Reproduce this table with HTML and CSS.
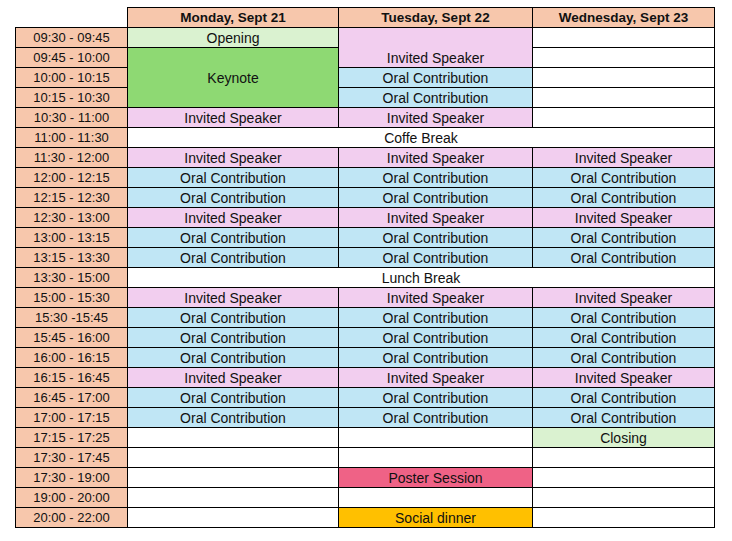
FILE: index.html
```html
<!DOCTYPE html>
<html>
<head>
<meta charset="utf-8">
<link rel="stylesheet" href="styles.css">
</head>
<body>
<table class="sched">
  <colgroup>
    <col class="c-time"><col class="c-mon"><col class="c-tue"><col class="c-wed">
  </colgroup>
  <thead>
    <tr><th class="corner"></th><th>Monday, Sept 21</th><th>Tuesday, Sept 22</th><th>Wednesday, Sept 23</th></tr>
  </thead>
  <tbody>
    <tr><td class="t">09:30 - 09:45</td><td class="open">Opening</td><td class="inv bottom" rowspan="2">Invited Speaker</td><td></td></tr>
    <tr><td class="t">09:45 - 10:00</td><td class="key" rowspan="3">Keynote</td><td></td></tr>
    <tr><td class="t">10:00 - 10:15</td><td class="oral">Oral Contribution</td><td></td></tr>
    <tr><td class="t">10:15 - 10:30</td><td class="oral">Oral Contribution</td><td></td></tr>
    <tr><td class="t">10:30 - 11:00</td><td class="inv">Invited Speaker</td><td class="inv">Invited Speaker</td><td></td></tr>
    <tr><td class="t">11:00 - 11:30</td><td colspan="3">Coffe Break</td></tr>
    <tr><td class="t">11:30 - 12:00</td><td class="inv">Invited Speaker</td><td class="inv">Invited Speaker</td><td class="inv">Invited Speaker</td></tr>
    <tr><td class="t">12:00 - 12:15</td><td class="oral">Oral Contribution</td><td class="oral">Oral Contribution</td><td class="oral">Oral Contribution</td></tr>
    <tr><td class="t">12:15 - 12:30</td><td class="oral">Oral Contribution</td><td class="oral">Oral Contribution</td><td class="oral">Oral Contribution</td></tr>
    <tr><td class="t">12:30 - 13:00</td><td class="inv">Invited Speaker</td><td class="inv">Invited Speaker</td><td class="inv">Invited Speaker</td></tr>
    <tr><td class="t">13:00 - 13:15</td><td class="oral">Oral Contribution</td><td class="oral">Oral Contribution</td><td class="oral">Oral Contribution</td></tr>
    <tr><td class="t">13:15 - 13:30</td><td class="oral">Oral Contribution</td><td class="oral">Oral Contribution</td><td class="oral">Oral Contribution</td></tr>
    <tr><td class="t">13:30 - 15:00</td><td colspan="3">Lunch Break</td></tr>
    <tr><td class="t">15:00 - 15:30</td><td class="inv">Invited Speaker</td><td class="inv">Invited Speaker</td><td class="inv">Invited Speaker</td></tr>
    <tr><td class="t">15:30 -15:45</td><td class="oral">Oral Contribution</td><td class="oral">Oral Contribution</td><td class="oral">Oral Contribution</td></tr>
    <tr><td class="t">15:45 - 16:00</td><td class="oral">Oral Contribution</td><td class="oral">Oral Contribution</td><td class="oral">Oral Contribution</td></tr>
    <tr><td class="t">16:00 - 16:15</td><td class="oral">Oral Contribution</td><td class="oral">Oral Contribution</td><td class="oral">Oral Contribution</td></tr>
    <tr><td class="t">16:15 - 16:45</td><td class="inv">Invited Speaker</td><td class="inv">Invited Speaker</td><td class="inv">Invited Speaker</td></tr>
    <tr><td class="t">16:45 - 17:00</td><td class="oral">Oral Contribution</td><td class="oral">Oral Contribution</td><td class="oral">Oral Contribution</td></tr>
    <tr><td class="t">17:00 - 17:15</td><td class="oral">Oral Contribution</td><td class="oral">Oral Contribution</td><td class="oral">Oral Contribution</td></tr>
    <tr><td class="t">17:15 - 17:25</td><td></td><td></td><td class="open">Closing</td></tr>
    <tr><td class="t">17:30 - 17:45</td><td></td><td></td><td></td></tr>
    <tr><td class="t">17:30 - 19:00</td><td></td><td class="poster">Poster Session</td><td></td></tr>
    <tr><td class="t">19:00 - 20:00</td><td></td><td></td><td></td></tr>
    <tr><td class="t">20:00 - 22:00</td><td></td><td class="dinner">Social dinner</td><td></td></tr>
  </tbody>
</table>
</body>
</html>
```

FILE: styles.css
```css
html, body {
  margin: 0;
  padding: 0;
  background: #ffffff;
}
body {
  padding: 7px 0 0 15px;
  font-family: "Liberation Sans", Arial, sans-serif;
  font-size: 14px;
  color: #111111;
}
.sched {
  border-collapse: collapse;
  table-layout: fixed;
  width: 699px;
}
.c-time { width: 112px; }
.c-mon { width: 211px; }
.c-tue { width: 194px; }
.c-wed { width: 182px; }
.sched th,
.sched td {
  border: 1px solid #000000;
  height: 18px;
  padding: 1px 0 0 0;
  text-align: center;
  vertical-align: middle;
  white-space: nowrap;
  line-height: 18px;
}
.sched th {
  background: #f7c7ac;
  font-weight: bold;
  font-size: 13.5px;
}
.sched th.corner {
  background: transparent;
  border-top: none;
  border-left: none;
}
.sched td.t {
  background: #f7c7ac;
  font-size: 13px;
}
.sched td.bottom { vertical-align: bottom; }
.open { background: #daf2d0; }
.key { background: #8ed973; }
.inv { background: #f2ceef; }
.oral { background: #c0e6f5; }
.poster { background: #ef6286; }
.dinner { background: #ffc000; }
```
